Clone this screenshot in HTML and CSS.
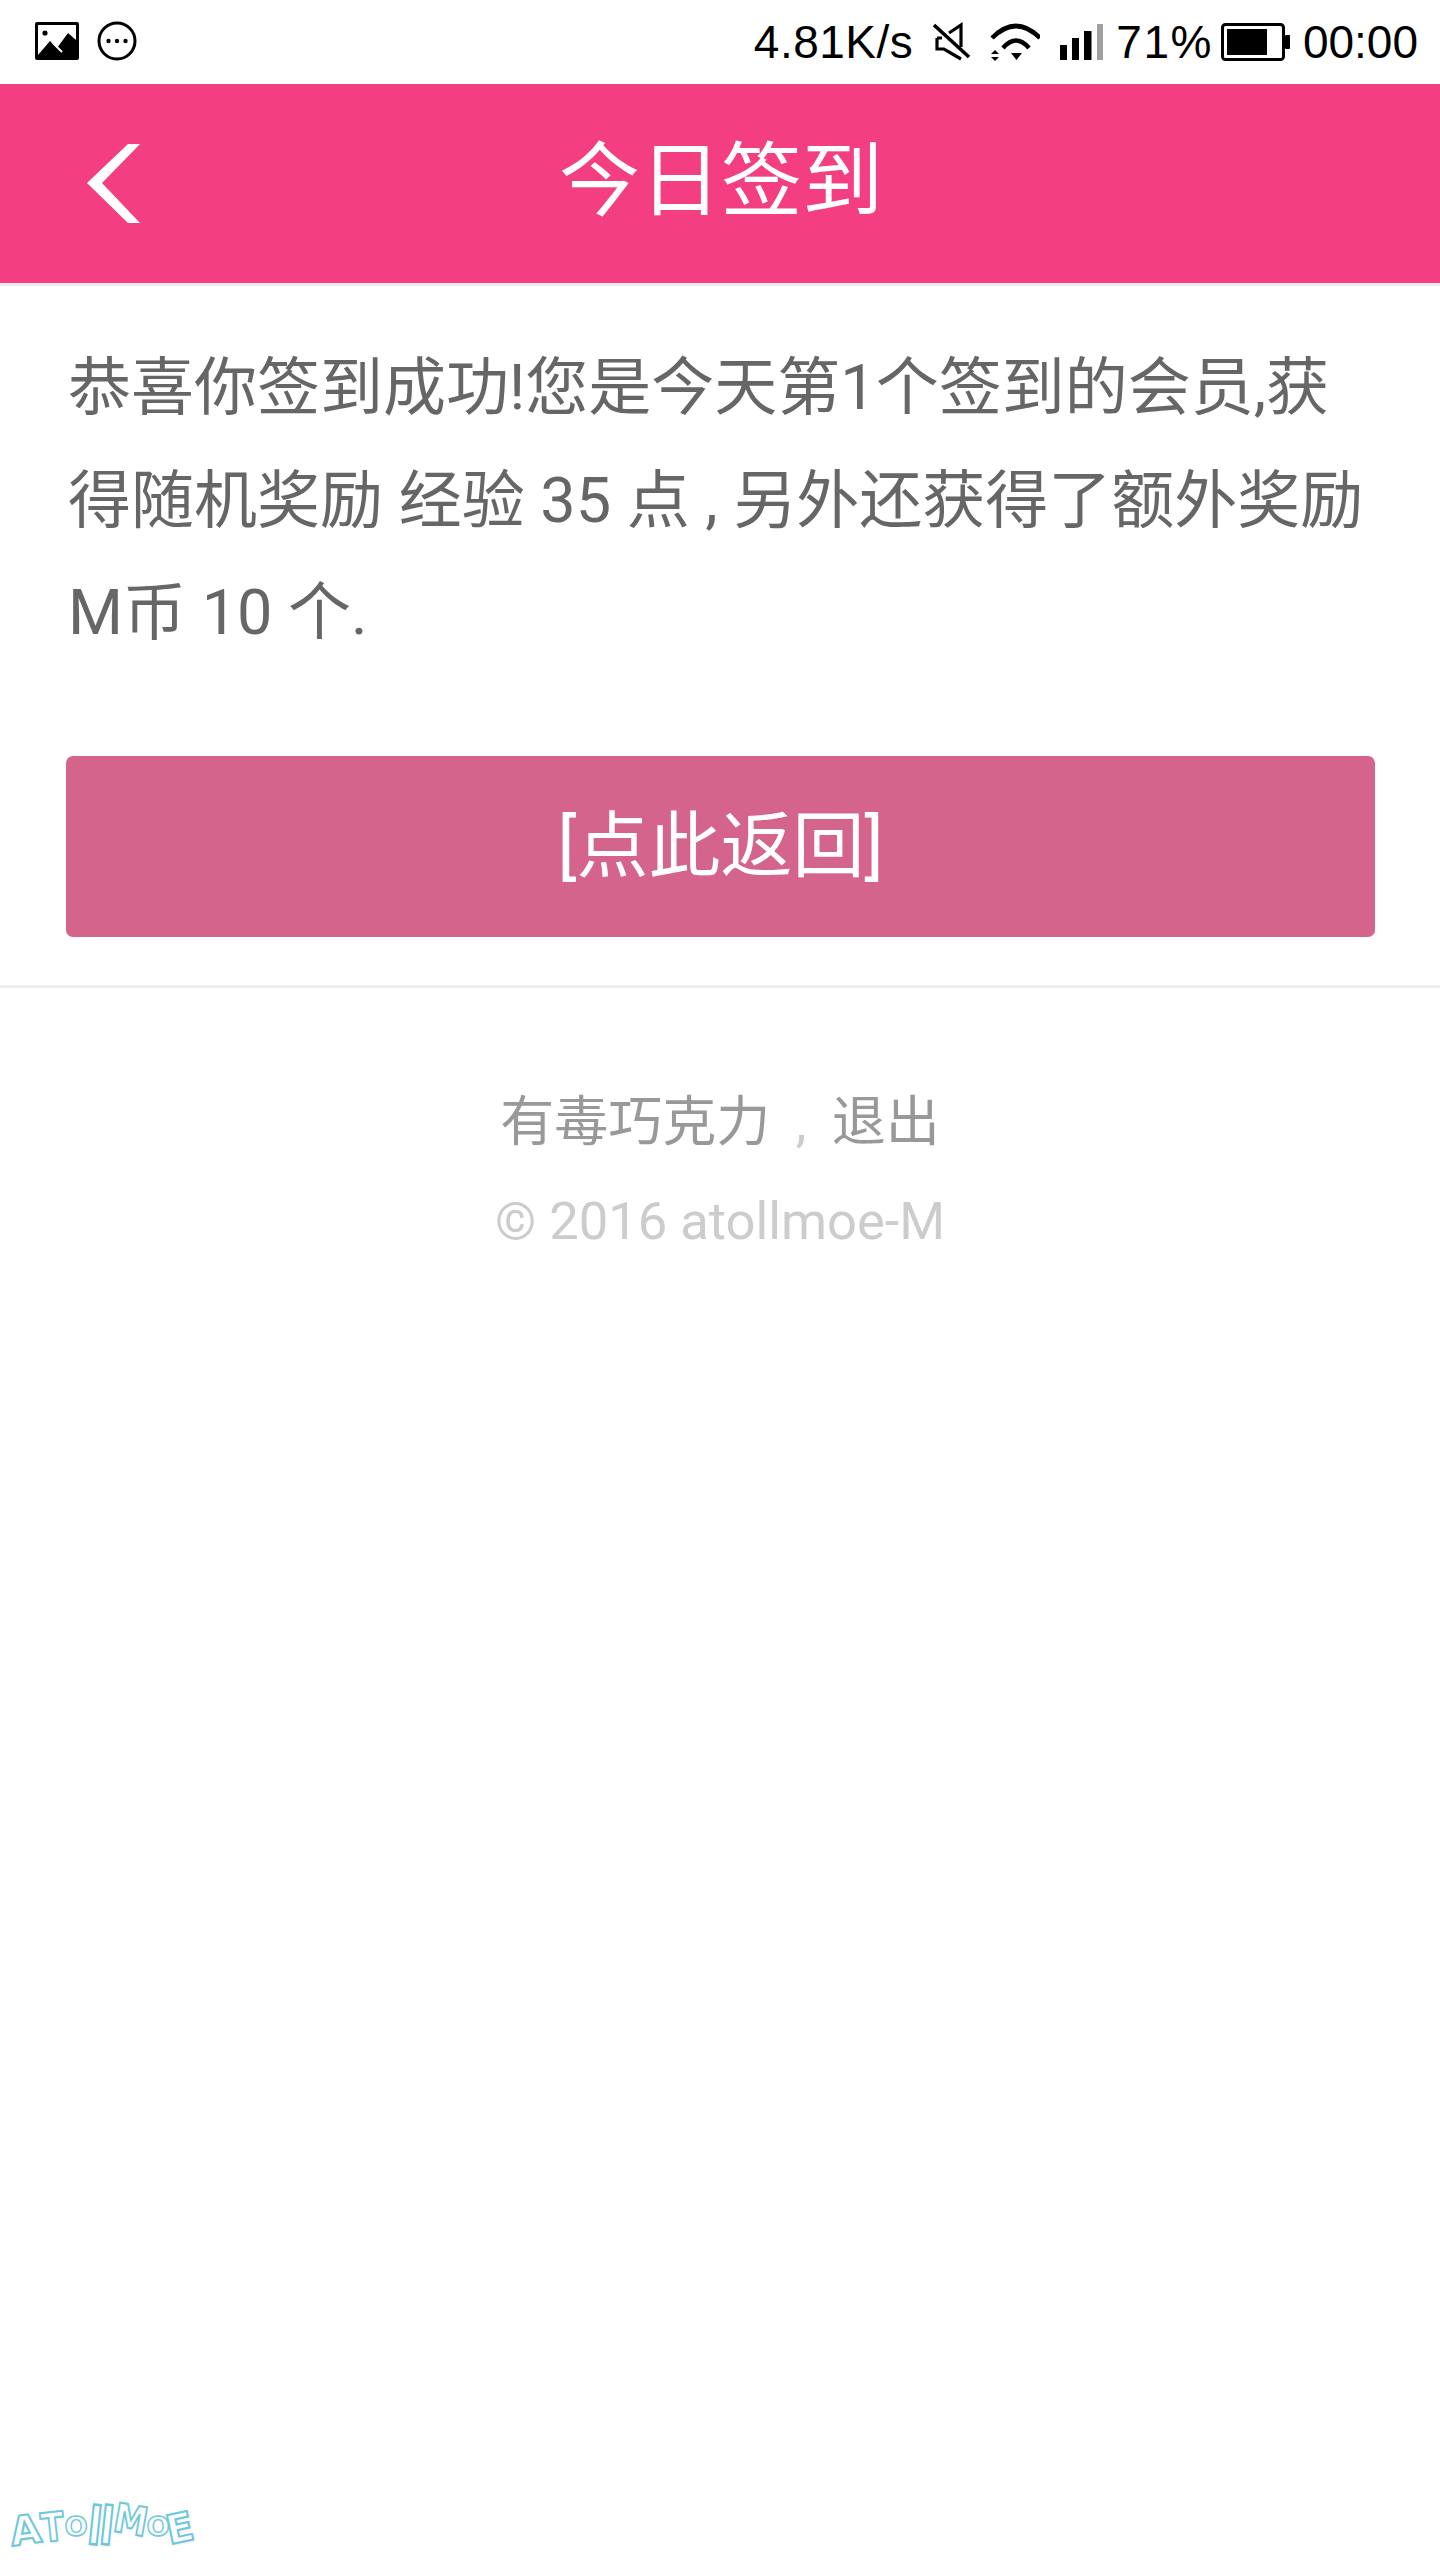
FILE: index.html
```html
<!DOCTYPE html>
<html lang="zh-CN">
<head>
    <meta charset="UTF-8">
    <meta name="viewport" content="width=device-width, initial-scale=1.0">
    <title>今日签到</title>
    <link rel="stylesheet" href="styles.css">
</head>
<body>
    <div id="page">
        <!-- Status bar -->
        <div class="status-bar">
            <svg class="ic-image" viewBox="0 0 44 38">
                <rect x="0" y="0" width="44" height="38" rx="2" fill="#000"/>
                <rect x="3" y="3" width="38" height="32" fill="#fff"/>
                <circle cx="10" cy="11" r="2.6" fill="#000"/>
                <path d="M3 33 L15 19 L22 26 L33 11 L41 18 V35 H3 Z" fill="#000"/>
                <path d="M18 21 L27 30" stroke="#fff" stroke-width="2" fill="none"/>
            </svg>
            <svg class="ic-more" viewBox="0 0 40 40">
                <circle cx="20" cy="20" r="18" fill="none" stroke="#000" stroke-width="3"/>
                <circle cx="11.5" cy="20" r="2.2"/>
                <circle cx="20" cy="20" r="2.2"/>
                <circle cx="28.5" cy="20" r="2.2"/>
            </svg>
            <span class="status-spacer"></span>
            <span class="status-text net">4.81K/s</span>
            <svg class="ic-mute" viewBox="0 0 38 40">
                <path d="M4 16 V27 H11 L28 37 M28 25 V3 L16 11 M4 16 H9" fill="none" stroke="#000" stroke-width="3.2"/>
                <path d="M1 3 L36 35" stroke="#000" stroke-width="3.6"/>
            </svg>
            <svg class="ic-wifi" viewBox="0 0 50 40">
                <path d="M2 16 Q26 -8 50 16" fill="none" stroke="#000" stroke-width="4.5"/>
                <path d="M13 26 Q26 11 39 26" fill="none" stroke="#000" stroke-width="4.5"/>
                <path d="M21 31 H32 L26.5 38 Z" fill="#000"/>
                <path d="M5 28 L9 32 H1 Z M5 39 L9 35 H1 Z" fill="#000"/>
            </svg>
            <svg class="ic-signal" viewBox="0 0 44 36">
                <rect x="1" y="21" width="7" height="15"/>
                <rect x="13" y="14" width="7" height="22"/>
                <rect x="25" y="7" width="7.5" height="29"/>
                <rect x="38" y="0" width="6" height="36" fill="#a0a0a0"/>
            </svg>
            <span class="status-text pct">71%</span>
            <svg class="ic-battery" viewBox="0 0 69 38">
                <rect x="1.5" y="1.5" width="61" height="35" rx="3" fill="#fff" stroke="#000" stroke-width="3"/>
                <rect x="6" y="6" width="40" height="26" fill="#000"/>
                <rect x="64" y="12" width="5" height="14" rx="1"/>
            </svg>
            <span class="status-text time">00:00</span>
        </div>

        <!-- Header -->
        <div class="top-bar">
            <svg class="back" viewBox="0 0 53 79">
                <path d="M41 0 H53 L15 39 L53 79 H41 L0 39 Z" fill="#fff"/>
            </svg>
            <h1>今日签到</h1>
        </div>

        <!-- Message -->
        <div class="content">
            <p class="msg">恭喜你签到成功!您是今天第1个签到的会员,获得随机奖励 经验 35 点 , 另外还获得了额外奖励 M币 10 个.</p>
            <a class="back-btn">[点此返回]</a>
        </div>

        <!-- Footer -->
        <div class="footer">
            <p class="user">有毒巧克力 <span class="sep">,</span> 退出</p>
            <p class="copy">© 2016 atollmoe-M</p>
        </div>

        <!-- Watermark -->
        <div class="watermark"><span class="l1">A</span><span class="l2">T</span><span class="l3">O</span><span class="l4">l</span><span class="l5">l</span><span class="l6">M</span><span class="l7">O</span><span class="l8">E</span></div>
    </div>
</body>
</html>
```

FILE: styles.css
```css
/* styles.css */
html, body {
margin: 0;
padding: 0;
background-color: #fff;
}

#page {
position: relative;
width: 1440px;
height: 2560px;
overflow: hidden;
font-family: Roboto, "Noto Sans CJK SC", sans-serif;
}

.status-bar {
display: flex;
align-items: center;
height: 84px;
padding: 0 22px 0 35px;
box-sizing: border-box;
}

.status-spacer {
flex: 1;
}

.status-text {
font-family: "Liberation Sans", Arial, sans-serif;
font-size: 46px;
color: #000;
line-height: 84px;
}

.net {
letter-spacing: .5px;
}

.ic-image {
width: 44px;
height: 38px;
margin-top: -2px;
}

.ic-more {
width: 40px;
height: 40px;
margin: -2px 0 0 18px;
}

.ic-mute {
width: 38px;
height: 40px;
margin-left: 20px;
}

.ic-wifi {
width: 50px;
height: 40px;
margin-left: 19px;
}

.ic-signal {
width: 44px;
height: 36px;
margin-left: 19px;
}

.pct {
margin-left: 13px;
letter-spacing: 1.5px;
}

.ic-battery {
width: 69px;
height: 38px;
margin-left: 8px;
}

.time {
margin-left: 13px;
}

.top-bar {
position: relative;
display: flex;
align-items: center;
justify-content: center;
height: 199px;
background-color: #f43e82;
border-bottom: 3px solid #efe9ec;
}

.top-bar h1 {
margin: 0;
padding: 0 0 20px 2px;
font-size: 81px;
font-weight: 400;
color: #fff;
}

.back {
position: absolute;
left: 87px;
top: 60px;
width: 53px;
height: 79px;
}

.content {
padding: 46px 65px 48px 66px;
border-bottom: 3px solid #eee;
}

.msg {
margin: 0 0 86px;
padding-left: 2px;
font-size: 63px;
line-height: 112.5px;
color: #666;
}

.back-btn {
display: block;
height: 181px;
line-height: 181px;
text-align: center;
font-size: 72px;
color: #fff;
background-color: #d5648d;
border-radius: 7px;
}

.footer {
padding-top: 85px;
text-align: center;
}

.footer p {
margin: 0;
line-height: 99px;
}

.user {
font-size: 54px;
color: #999;
}

.sep {
margin: 0 12px;
color: #ccc;
}

.footer .copy {
font-size: 52.5px;
color: #ccc;
}

.watermark {
position: absolute;
left: 10px;
top: 2500px;
display: flex;
align-items: flex-start;
font-family: "DejaVu Sans", sans-serif;
font-weight: 700;
font-size: 40px;
line-height: 46px;
color: #fff;
-webkit-text-stroke: 2px #6cc8dc;
text-shadow: 1px 2px 2px #f0e6ea;
}

.watermark span {
display: block;
}

.l1 { transform: translateY(7px) rotate(-8deg); }
.l2 { transform: translateY(4px) rotate(-6deg) scaleX(.85); margin-left: -2px; }
.l3 { transform: translateY(3px) scale(.68); margin: 0 -5px 0 -7px; }
.l4 { transform: translateY(3px) rotate(6deg) scaleY(1.3); }
.l5 { transform: translateY(3px) rotate(6deg) scaleY(1.3); margin-left: -2px; }
.l6 { transform: translateY(-3px) rotate(10deg) scaleX(.85); margin-left: -3px; }
.l7 { transform: translateY(3px) scale(.68); margin: 0 -9px 0 -10px; }
.l8 { transform: translateY(5px) rotate(-12deg); }
```
